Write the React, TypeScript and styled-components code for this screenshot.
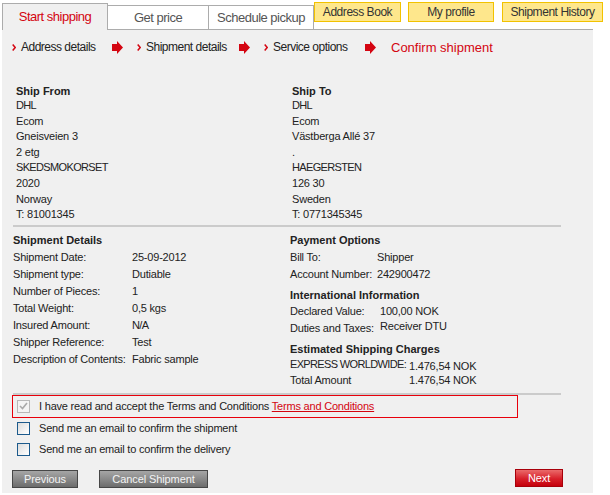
import React from "react";
import styled, { createGlobalStyle, css } from "styled-components";

const GlobalStyle = createGlobalStyle`
  html, body {
    margin: 0;
    padding: 0;
    background: #fff;
  }
  body {
    font-family: "Liberation Sans", Arial, sans-serif;
    font-size: 11px;
    letter-spacing: -0.2px;
    color: #222;
  }
`;

const DHL_RED = "#d40511";

const Page = styled.div`
  width: 591px;
  margin-left: 2px;
`;

/* ---------- header: tabs + yellow links ---------- */

const Header = styled.div`
  display: flex;
  align-items: flex-end;
  height: 29px;
`;

const Tab = styled.div<{ $active?: boolean; $width: number }>`
  box-sizing: border-box;
  flex-shrink: 0;
  width: ${({ $width }) => $width}px;
  text-align: center;
  font-size: 13px;
  letter-spacing: -0.5px;
  border-top: 1px solid #acacac;
  border-right: 1px solid #acacac;
  ${({ $active }) =>
    $active
      ? css`
          position: relative;
          z-index: 1;
          height: 27px;
          margin-bottom: -1px;
          padding-top: 1px;
          line-height: 24px;
          border-left: 1px solid #acacac;
          background: #f0f0f0;
          color: ${DHL_RED};
        `
      : css`
          height: 24px;
          line-height: 23px;
          background: #fff;
          color: #555;
        `}
`;

const QuickLinks = styled.div`
  display: flex;
  align-self: flex-start;
  margin-top: 2px;
  flex-shrink: 0;
`;

const QuickLink = styled.div<{ $width: number; $gap?: number }>`
  box-sizing: border-box;
  width: ${({ $width }) => $width}px;
  margin-left: ${({ $gap = 0 }) => $gap}px;
  height: 20px;
  line-height: 18px;
  text-align: center;
  font-size: 12px;
  letter-spacing: -0.45px;
  color: #333;
  background: #fee78c;
  border: 1px solid #f2c200;
`;

/* ---------- panel ---------- */

const Panel = styled.div`
  box-sizing: border-box;
  height: 464px;
  background: #f0f0f0;
  border-top: 1px solid #acacac;
`;

const Steps = styled.div`
  display: flex;
  align-items: center;
  height: 18px;
  padding: 8px 0 0 10px;
  font-size: 12px;
  letter-spacing: -0.5px;
`;

const Step = styled.div<{ $width: number }>`
  display: flex;
  align-items: center;
  gap: 5px;
  flex-shrink: 0;
  width: ${({ $width }) => $width}px;
  white-space: nowrap;
  color: #222;
`;

const CurrentStep = styled.div`
  margin-left: 1px;
  font-size: 13px;
  letter-spacing: 0;
  color: ${DHL_RED};
`;

const Arrow = styled.svg`
  margin-right: 14px;
  flex-shrink: 0;
`;

const Chevron = () => (
  <svg width="4" height="7" viewBox="0 0 4 7">
    <polyline points="0.7,0.5 3.2,3.5 0.7,6.5" fill="none" stroke={DHL_RED} strokeWidth="1.5" />
  </svg>
);

const StepArrow = () => (
  <Arrow width="11" height="13" viewBox="0 0 11 13">
    <polygon points="0,3 5,3 5,0 11,6.5 5,13 5,10 0,10" fill={DHL_RED} />
  </Arrow>
);

const Addresses = styled.div`
  display: grid;
  grid-template-columns: 276px 1fr;
  padding: 28px 0 0 14px;
`;

const Heading = styled.div<{ $gap?: number; $lh?: number; $after?: number }>`
  font-weight: bold;
  letter-spacing: 0;
  line-height: ${({ $lh = 14 }) => $lh}px;
  margin-top: ${({ $gap = 0 }) => $gap}px;
  margin-bottom: ${({ $after = 0 }) => $after}px;
`;

const AddressLine = styled.div`
  line-height: 15.6px;
`;

/* capitals in the original render narrower than Arial's */
const Caps = styled.span`
  letter-spacing: -0.65px;
`;

const Divider = styled.div<{ $gap: number }>`
  width: 548px;
  height: 2px;
  margin: ${({ $gap }) => $gap}px 0 0 11px;
  background: #cbcbcb;
`;

const Details = styled.div`
  display: grid;
  grid-template-columns: 277px 1fr;
  padding: 6px 0 0 11px;
`;

const KVGrid = styled.div<{ $label: number; $row: number }>`
  display: grid;
  grid-template-columns: ${({ $label }) => $label}px auto;
  grid-auto-rows: ${({ $row }) => $row}px;
  line-height: ${({ $row }) => $row}px;
`;

const Label = styled.span`
  white-space: nowrap;
`;

const Value = styled.span<{ $shift?: number }>`
  white-space: nowrap;
  margin-top: ${({ $shift = 0 }) => $shift}px;
`;

/* ---------- terms + options ---------- */

const TermsBox = styled.div`
  box-sizing: border-box;
  display: flex;
  align-items: center;
  gap: 9px;
  width: 506px;
  height: 23px;
  margin-left: 10px;
  padding-left: 4px;
  border: 1px solid #e8000b;
`;

const TermsLink = styled.a`
  color: ${DHL_RED};
  text-decoration: underline;
`;

const OptionRow = styled.label`
  display: flex;
  align-items: center;
  gap: 9px;
  height: 21px;
  padding-left: 15px;
`;

const Box = styled.span<{ $disabled?: boolean }>`
  box-sizing: border-box;
  display: flex;
  align-items: center;
  justify-content: center;
  flex-shrink: 0;
  width: 13px;
  height: 13px;
  ${({ $disabled }) =>
    $disabled
      ? css`
          border: 1px solid #b8b8b8;
          background: #f4f4f4;
        `
      : css`
          border: 1px solid #1c5a8c;
          background: linear-gradient(135deg, #dcdcdc 0%, #f2f2f2 60%, #ffffff 100%);
        `}
`;

const Checkbox = ({ checked, disabled }: { checked?: boolean; disabled?: boolean }) => (
  <Box $disabled={disabled}>
    {checked && (
      <svg width="9" height="8" viewBox="0 0 9 8">
        <polyline points="1,4 3.5,6.5 8,1" fill="none" stroke="#a9a9a9" strokeWidth="1.6" />
      </svg>
    )}
  </Box>
);

/* ---------- buttons ---------- */

const Buttons = styled.div`
  display: flex;
  align-items: flex-start;
  gap: 21px;
  margin-top: 10px;
  padding: 0 30px 0 10px;
`;

const Button = styled.button<{ $width: number; $primary?: boolean }>`
  box-sizing: border-box;
  width: ${({ $width }) => $width}px;
  height: 18px;
  padding: 0;
  font-family: inherit;
  font-size: 11px;
  letter-spacing: -0.1px;
  line-height: 16px;
  color: #f4f4f4;
  cursor: pointer;
  ${({ $primary }) =>
    $primary
      ? css`
          margin: -1px 0 0 auto;
          color: #fff;
          border: 1px solid #a8000a;
          background: linear-gradient(#ea6a6a, #d8202a 55%, #c4000b);
        `
      : css`
          border: 1px solid #474747;
          background: linear-gradient(#a6a6a6, #878787 55%, #6c6c6c);
        `}
`;

export default function App() {
  return (
    <>
      <GlobalStyle />
      <Page>
        <Header>
          <Tab $active $width={106}>Start shipping</Tab>
          <Tab $width={101}>Get price</Tab>
          <Tab $width={105}>Schedule pickup</Tab>
          <QuickLinks>
            <QuickLink $width={87}>Address Book</QuickLink>
            <QuickLink $width={86} $gap={7}>My profile</QuickLink>
            <QuickLink $width={101} $gap={8}>Shipment History</QuickLink>
          </QuickLinks>
        </Header>

        <Panel>
          <Steps>
            <Step $width={100}><Chevron />Address details</Step>
            <StepArrow />
            <Step $width={102}><Chevron />Shipment details</Step>
            <StepArrow />
            <Step $width={101}><Chevron />Service options</Step>
            <StepArrow />
            <CurrentStep>Confirm shipment</CurrentStep>
          </Steps>

          <Addresses>
            <div>
              <Heading>Ship From</Heading>
              <AddressLine><Caps>DHL</Caps></AddressLine>
              <AddressLine>Ecom</AddressLine>
              <AddressLine>Gneisveien 3</AddressLine>
              <AddressLine>2 etg</AddressLine>
              <AddressLine><Caps>SKEDSMOKORSET</Caps></AddressLine>
              <AddressLine>2020</AddressLine>
              <AddressLine>Norway</AddressLine>
              <AddressLine>T: 81001345</AddressLine>
            </div>
            <div>
              <Heading>Ship To</Heading>
              <AddressLine><Caps>DHL</Caps></AddressLine>
              <AddressLine>Ecom</AddressLine>
              <AddressLine>Västberga Allé 37</AddressLine>
              <AddressLine>.</AddressLine>
              <AddressLine><Caps>HAEGERSTEN</Caps></AddressLine>
              <AddressLine>126 30</AddressLine>
              <AddressLine>Sweden</AddressLine>
              <AddressLine>T: 0771345345</AddressLine>
            </div>
          </Addresses>

          <Divider $gap={2} />

          <Details>
            <div>
              <Heading $after={2}>Shipment Details</Heading>
              <KVGrid $label={119} $row={17}>
                <Label>Shipment Date:</Label><Value>25-09-2012</Value>
                <Label>Shipment type:</Label><Value>Dutiable</Value>
                <Label>Number of Pieces:</Label><Value>1</Value>
                <Label>Total Weight:</Label><Value>0,5 kgs</Value>
                <Label>Insured Amount:</Label><Value><Caps>N/A</Caps></Value>
                <Label>Shipper Reference:</Label><Value>Test</Value>
                <Label>Description of Contents:</Label><Value>Fabric sample</Value>
              </KVGrid>
            </div>
            <div>
              <Heading $after={2}>Payment Options</Heading>
              <KVGrid $label={87} $row={17}>
                <Label>Bill To:</Label><Value>Shipper</Value>
                <Label>Account Number:</Label><Value>242900472</Value>
              </KVGrid>
              <Heading $gap={5} $lh={15}>International Information</Heading>
              <KVGrid $label={90} $row={17}>
                <Label>Declared Value:</Label><Value>100,00 NOK</Value>
                <Label>Duties and Taxes:</Label><Value $shift={-2}>Receiver DTU</Value>
              </KVGrid>
              <Heading $gap={5}>Estimated Shipping Charges</Heading>
              <KVGrid $label={119} $row={16}>
                <Label><Caps>EXPRESS WORLDWIDE:</Caps></Label><Value $shift={2}>1.476,54 NOK</Value>
                <Label>Total Amount</Label><Value>1.476,54 NOK</Value>
              </KVGrid>
            </div>
          </Details>

          <Divider $gap={5} />

          <TermsBox>
            <Checkbox checked disabled />
            <span>
              I have read and accept the Terms and Conditions <TermsLink>Terms and Conditions</TermsLink>
            </span>
          </TermsBox>
          <OptionRow>
            <Checkbox />
            Send me an email to confirm the shipment
          </OptionRow>
          <OptionRow>
            <Checkbox />
            Send me an email to confirm the delivery
          </OptionRow>

          <Buttons>
            <Button $width={66}>Previous</Button>
            <Button $width={109}>Cancel Shipment</Button>
            <Button $width={48} $primary>Next</Button>
          </Buttons>
        </Panel>
      </Page>
    </>
  );
}
